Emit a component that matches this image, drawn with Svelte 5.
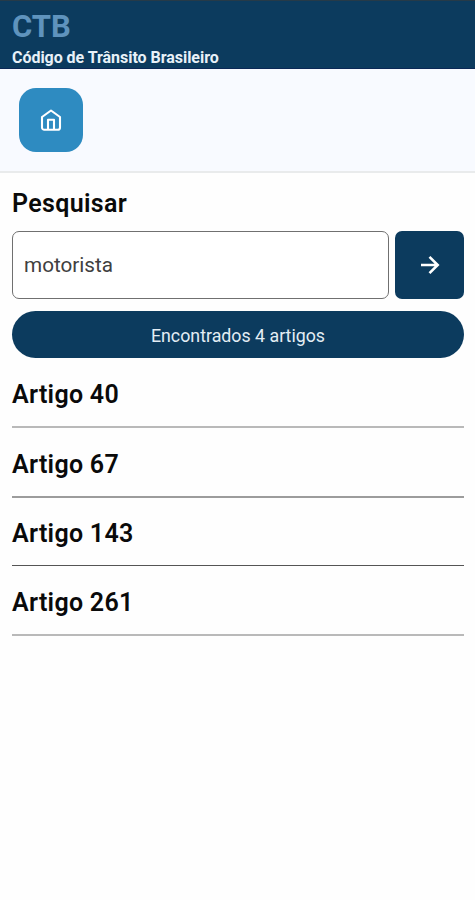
<script>
    let query = $state('motorista');

    const articles = [
        { number: 40, tone: 'light' },
        { number: 67, tone: 'medium' },
        { number: 143, tone: 'dark' },
        { number: 261, tone: 'light' }
    ];
</script>

<div class="app">
    <header>
        <h1>CTB</h1>
        <p>Código de Trânsito Brasileiro</p>
    </header>

    <nav>
        <button class="home" aria-label="Início">
            <svg width="22" height="24" viewBox="0 0 22 24" fill="none" stroke="currentColor" stroke-width="2.1" stroke-linejoin="round">
                <path d="M2 9 11 2.5 20 9v10.5a2.3 2.3 0 0 1-2.3 2.3H4.3A2.3 2.3 0 0 1 2 19.5Z" />
                <path d="M8 21.5V11.8h6v9.7" />
            </svg>
        </button>
    </nav>

    <main>
        <h2>Pesquisar</h2>
        <div class="search">
            <input type="text" aria-label="Pesquisar" bind:value={query} />
            <button class="submit" aria-label="Buscar">
                <svg width="20" height="20" viewBox="0 0 20 20" fill="none" stroke="currentColor" stroke-width="2.6">
                    <path d="M1 10h16M9.5 1.8l8.2 8.2-8.2 8.2" />
                </svg>
            </button>
        </div>

        <div class="result">Encontrados {articles.length} artigos</div>

        <ul>
            {#each articles as article}
                <li class={article.tone}>Artigo {article.number}</li>
            {/each}
        </ul>
    </main>
</div>

<style>
    :global(body) {
        background: #fefefe;
    }

    .app {
        height: 900px;
        font-family: Roboto, "Liberation Sans", sans-serif;
        color: #0a0a0a;
    }

    h1, h2, p, ul {
        margin: 0;
        padding: 0;
    }

    button {
        display: flex;
        align-items: center;
        justify-content: center;
        padding: 0;
        border: none;
        color: #fff;
    }

    svg {
        display: block;
    }

    header {
        box-sizing: border-box;
        height: 69px;
        padding: 8px 12px 0;
        background: #0c3b5e;
        border-top: 1px solid #263a48;
        border-bottom: 1px solid #0b2856;
    }

    h1 {
        font-size: 31px;
        font-weight: 700;
        line-height: 36px;
        color: #5f93bd;
    }

    header p {
        margin-top: 4px;
        font-size: 16px;
        font-weight: 700;
        line-height: 18px;
        letter-spacing: -0.04px;
        color: #e8f1f8;
    }

    nav {
        box-sizing: border-box;
        height: 104px;
        padding: 19px 19px 0;
        background: #f8faff;
        border-bottom: 2px solid #e9ebec;
    }

    .home {
        width: 64px;
        height: 64px;
        border-radius: 17px;
        background: #2e8bc1;
    }

    main {
        padding: 15px 11px 0 12px;
    }

    h2 {
        font-size: 25px;
        font-weight: 600;
        line-height: 32px;
        letter-spacing: 0.35px;
    }

    .search {
        display: flex;
        gap: 6px;
        height: 68px;
        margin-top: 11px;
    }

    input {
        box-sizing: border-box;
        flex: 1;
        min-width: 0;
        padding: 0 11px;
        border: 1px solid #707070;
        border-radius: 7px;
        outline: none;
        background: #fff;
        font: 20.7px Roboto, "Liberation Sans", sans-serif;
        color: #404040;
    }

    .submit {
        width: 69px;
        border-radius: 7px;
        background: #0c3b5e;
    }

    .result {
        height: 47px;
        margin-top: 12px;
        border-radius: 24px;
        background: #0c3b5e;
        font-size: 17.8px;
        line-height: 50px;
        text-align: center;
        color: #e3edf4;
    }

    ul {
        list-style: none;
    }

    li {
        box-sizing: border-box;
        height: 70px;
        padding-top: 21px;
        border-bottom: 2px solid #b9b9b9;
        font-size: 25px;
        font-weight: 600;
        line-height: 32px;
        letter-spacing: 0.3px;
    }

    .medium {
        border-color: #9c9c9c;
    }

    .dark {
        height: 68px;
        padding-top: 20px;
        border-bottom: 1px solid #555;
    }
</style>
